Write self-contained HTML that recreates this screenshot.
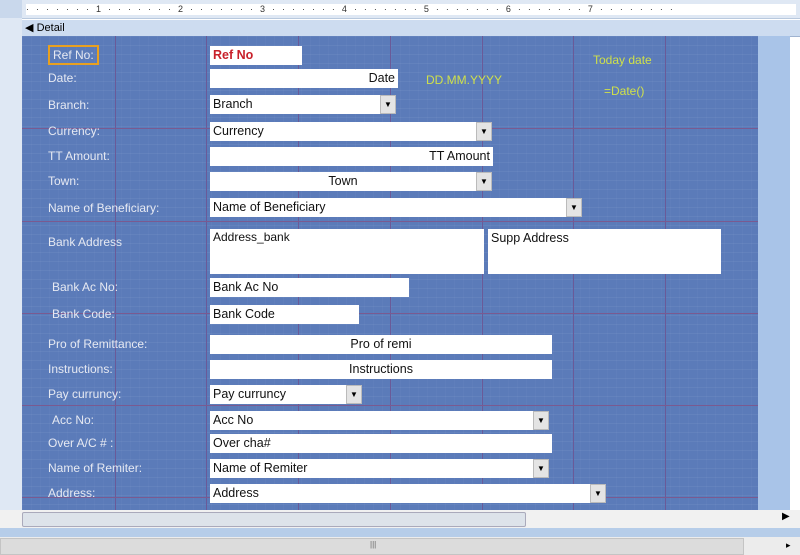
<!DOCTYPE html><html><head><style>
body{margin:0;width:800px;height:555px;overflow:hidden;background:#fff;font-family:"Liberation Sans",sans-serif;position:relative}
.a{position:absolute}
.ruler{left:0;top:0;width:800px;height:18px;background:#dfe8f4;border-bottom:1px solid #b9c9de}
.lft{left:0;top:18px;width:22px;height:492px;background:#dfe8f4}
.canvas{left:22px;top:36px;width:736px;height:474px;background-color:#5b7bb9;
background-image:linear-gradient(90deg,rgba(40,40,110,.0) 0,rgba(255,255,255,.05) 1px,transparent 1px),linear-gradient(rgba(255,255,255,.05) 1px,transparent 1px);background-size:9px 9px}
.vl{width:1px;background:#6a5a98;top:36px;height:474px}
.hl{height:1px;background:#7a5a90;left:22px;width:736px}
.lab{color:#e6e9f2;font-size:12px}
.box{background:#fff;font-size:12.5px;color:#111;height:19px;line-height:19px;box-sizing:border-box;padding:0 3px;white-space:nowrap}
.r{text-align:right}.c{text-align:center}
.dd{width:16px;height:19px;background:#e4e4e4;box-sizing:border-box;border:1px solid #bbb;font-size:8px;text-align:center;line-height:17px;color:#000}
.y{color:#cfe04a;font-size:12px}
</style></head><body>
<div class="a ruler"></div>
<div class="a" style="left:0;top:0;width:22px;height:18px;background:#c9d8ec"></div>
<div class="a" style="left:26px;top:4px;width:770px;height:11px;background:#fff;font-size:9px;line-height:11px;color:#333;letter-spacing:7px;overflow:hidden">·······1·······2·······3·······4·······5·······6·······7········</div>
<div class="a lft"></div>
<div class="a" style="left:22px;top:20px;width:778px;height:16px;background:#cddcf0;border-bottom:1px solid #9fb3d0;font-size:11px;line-height:16px;color:#000">&nbsp;◀ Detail</div>
<div class="a canvas"></div>
<div class="a" style="left:758px;top:36px;width:32px;height:474px;background:#a9c4e8"></div>
<div class="a vl" style="left:115px"></div><div class="a vl" style="left:206px"></div><div class="a vl" style="left:298px"></div><div class="a vl" style="left:390px"></div><div class="a vl" style="left:482px"></div><div class="a vl" style="left:573px"></div><div class="a vl" style="left:665px"></div>
<div class="a hl" style="top:128px"></div><div class="a hl" style="top:221px"></div><div class="a hl" style="top:313px"></div><div class="a hl" style="top:405px"></div><div class="a hl" style="top:497px"></div>

<div class="a lab" style="left:48px;top:45px;border:2px solid #e8a020;padding:1px 3px">Ref No:</div>
<div class="a lab" style="left:48px;top:71px">Date:</div>
<div class="a lab" style="left:48px;top:98px">Branch:</div>
<div class="a lab" style="left:48px;top:124px">Currency:</div>
<div class="a lab" style="left:48px;top:149px">TT Amount:</div>
<div class="a lab" style="left:48px;top:174px">Town:</div>
<div class="a lab" style="left:48px;top:201px">Name of Beneficiary:</div>
<div class="a lab" style="left:48px;top:235px">Bank Address</div>
<div class="a lab" style="left:52px;top:280px">Bank Ac No:</div>
<div class="a lab" style="left:52px;top:307px">Bank Code:</div>
<div class="a lab" style="left:48px;top:337px">Pro of Remittance:</div>
<div class="a lab" style="left:48px;top:362px">Instructions:</div>
<div class="a lab" style="left:48px;top:387px">Pay curruncy:</div>
<div class="a lab" style="left:52px;top:413px">Acc No:</div>
<div class="a lab" style="left:48px;top:436px">Over A/C # :</div>
<div class="a lab" style="left:48px;top:461px">Name of Remiter:</div>
<div class="a lab" style="left:48px;top:486px">Address:</div>

<div class="a box" style="left:210px;top:46px;width:92px;color:#c8202a;font-weight:bold">Ref No</div>
<div class="a box r" style="left:210px;top:69px;width:188px">Date</div>
<div class="a box" style="left:210px;top:95px;width:170px">Branch</div><div class="a dd" style="left:380px;top:95px">▼</div>
<div class="a box" style="left:210px;top:122px;width:266px">Currency</div><div class="a dd" style="left:476px;top:122px">▼</div>
<div class="a box r" style="left:210px;top:147px;width:283px">TT Amount</div>
<div class="a box c" style="left:210px;top:172px;width:266px">Town</div><div class="a dd" style="left:476px;top:172px">▼</div>
<div class="a box" style="left:210px;top:198px;width:356px">Name of Beneficiary</div><div class="a dd" style="left:566px;top:198px">▼</div>
<div class="a box" style="left:210px;top:229px;width:274px;height:45px;line-height:17px;font-size:12px">Address_bank</div>
<div class="a box" style="left:488px;top:229px;width:233px;height:45px;line-height:19px">Supp Address</div>
<div class="a box" style="left:210px;top:278px;width:199px">Bank Ac No</div>
<div class="a box" style="left:210px;top:305px;width:149px">Bank Code</div>
<div class="a box c" style="left:210px;top:335px;width:342px">Pro of remi</div>
<div class="a box c" style="left:210px;top:360px;width:342px">Instructions</div>
<div class="a box" style="left:210px;top:385px;width:136px">Pay curruncy</div><div class="a dd" style="left:346px;top:385px">▼</div>
<div class="a box" style="left:210px;top:411px;width:323px">Acc No</div><div class="a dd" style="left:533px;top:411px">▼</div>
<div class="a box" style="left:210px;top:434px;width:342px">Over cha#</div>
<div class="a box" style="left:210px;top:459px;width:323px">Name of Remiter</div><div class="a dd" style="left:533px;top:459px">▼</div>
<div class="a box" style="left:210px;top:484px;width:380px">Address</div><div class="a dd" style="left:590px;top:484px">▼</div>

<div class="a y" style="left:426px;top:73px">DD.MM.YYYY</div>
<div class="a y" style="left:593px;top:53px">Today date</div>
<div class="a y" style="left:604px;top:84px">=Date()</div>

<div class="a" style="left:0;top:510px;width:800px;height:18px;background:#f1f1f1"></div>
<div class="a" style="left:22px;top:512px;width:502px;height:13px;background:#dde3ea;border:1px solid #aab;border-radius:2px"></div>
<div class="a" style="left:782px;top:511px;font-size:10px">▶</div>
<div class="a" style="left:0;top:528px;width:800px;height:9px;background:#b6cde9"></div>
<div class="a" style="left:0;top:537px;width:800px;height:18px;background:#ececec"></div>
<div class="a" style="left:0;top:538px;width:742px;height:15px;background:#dcdcdc;border:1px solid #c4c4c4"></div>
<div class="a" style="left:370px;top:540px;font-size:8px;color:#666">|||</div>
<div class="a" style="left:786px;top:540px;font-size:9px">▸</div>
</body></html>
